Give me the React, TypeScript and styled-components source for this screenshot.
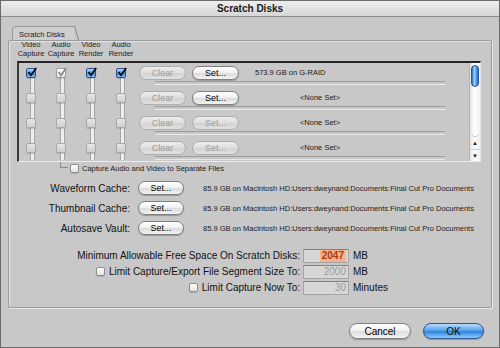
import React from "react";
import styled, { createGlobalStyle, css } from "styled-components";

const Global = createGlobalStyle`
  html, body { margin: 0; padding: 0; background: #c8c8c8; }
  * { box-sizing: border-box; }
`;

const Window = styled.div`
  width: 500px;
  height: 348px;
  background: #c8c8c9;
  border: 1px solid #6c6c6c;
  display: flex;
  flex-direction: column;
  font-family: "Liberation Sans", Arial, sans-serif;
  color: #111;
  overflow: hidden;
`;

const TitleBar = styled.div`
  height: 16px;
  flex: none;
  display: flex;
  align-items: center;
  justify-content: center;
  background: linear-gradient(#eeeeee, #d6d6d6);
  border-bottom: 1px solid #8e8e8e;
  font-size: 10px;
  font-weight: bold;
  color: #1a1a1a;
`;

const Body = styled.div`
  flex: 1;
  display: flex;
  flex-direction: column;
  padding: 9px 7px 0 7px;
`;

const TabStrip = styled.div`
  display: flex;
  padding-left: 4px;
`;

const Tab = styled.div`
  position: relative;
  height: 14px;
  padding: 3px 9px 0 6px;
  font-size: 7.5px;
  color: #222;
  background: #cecece;
  border-left: 1px solid #9a9a9a;
  border-top: 1px solid #9a9a9a;
  border-top-left-radius: 4px;
  &::after {
    content: "";
    position: absolute;
    right: -1px;
    top: -1px;
    width: 1px;
    height: 15px;
    background: #8a8a8a;
    transform: rotate(-16deg);
    transform-origin: top;
  }
`;

const Panel = styled.div`
  height: 268px;
  display: flex;
  flex-direction: column;
  border: 1px solid #9b9b9b;
  box-shadow: inset 1px 1px 0 #e4e4e4, 1px 1px 0 #e8e8e8;
  border-radius: 2px;
`;

const CheckGrid = styled.div`
  display: grid;
  grid-template-columns: repeat(4, 24px);
  column-gap: 6px;
  flex: none;
`;

const Headers = styled(CheckGrid)`
  margin: -1px 0 0 10px;
  height: 21px;
`;

const HeaderCell = styled.div`
  font-size: 7.5px;
  line-height: 9px;
  text-align: center;
  white-space: nowrap;
  display: flex;
  justify-content: center;
  color: #222;
`;

const ListBox = styled.div`
  margin: 0 10px 0 8px;
  height: 101px;
  display: flex;
  border-top: 2px solid #262626;
  border-left: 2px solid #3a3a3a;
  border-right: 1px solid #e6e6e6;
  border-bottom: 1px solid #ececec;
  overflow: hidden;
`;

const RowsArea = styled.div`
  flex: 1;
  margin-top: -3px;
`;

const Row = styled.div`
  position: relative;
  height: 25px;
  display: flex;
  align-items: center;
  &::after {
    content: "";
    position: absolute;
    left: 136px;
    right: 24px;
    bottom: 0;
    height: 2px;
    border-top: 1px solid #9c9c9c;
    border-bottom: 1px solid #e9e9e9;
  }
`;

const RowChecks = styled(CheckGrid)`
  height: 100%;
`;

const CheckCell = styled.div<{ $first?: boolean }>`
  position: relative;
  display: flex;
  align-items: center;
  justify-content: center;
  &::before {
    content: "";
    position: absolute;
    left: 50%;
    margin-left: -1px;
    top: ${(p) => (p.$first ? "50%" : "0")};
    bottom: 0;
    width: 3px;
    background: #eeeeee;
    border-left: 1px solid #a6a6a6;
    border-right: 1px solid #a6a6a6;
  }
`;

const boxStates = {
  on: css`
    background: linear-gradient(#b4dafc, #4a98e6 50%, #2f83dc 52%, #8ccaf9);
    border: 1px solid #2b4f86;
    color: #0c0c0c;
  `,
  dim: css`
    background: linear-gradient(#ffffff, #e4e4e4);
    border: 1px solid #9c9c9c;
    color: #8a8a8a;
  `,
  off: css`
    background: linear-gradient(#e6e6e6, #cfcfcf);
    border: 1px solid #a9a9a9;
    color: transparent;
  `,
  plain: css`
    background: linear-gradient(#ffffff, #e2e2e2);
    border: 1px solid #8d8d8d;
    color: transparent;
  `,
};

type BoxState = keyof typeof boxStates;

const Box = styled.span<{ $state: BoxState; $size?: number }>`
  position: relative;
  z-index: 1;
  flex: none;
  width: ${(p) => p.$size ?? 10}px;
  height: ${(p) => p.$size ?? 10}px;
  border-radius: 2px;
  display: flex;
  align-items: center;
  justify-content: center;
  box-shadow: 0 1px 1px rgba(0, 0, 0, 0.15);
  ${(p) => boxStates[p.$state]}
  svg {
    margin-top: -2px;
    margin-right: -2px;
  }
`;

const Check = ({ state, size }: { state: BoxState; size?: number }) => (
  <Box $state={state} $size={size}>
    {(state === "on" || state === "dim") && (
      <svg width="10" height="10" viewBox="0 0 10 10">
        <path d="M1.5 5 L4 8.2 L9.2 1" fill="none" stroke="currentColor" strokeWidth="1.8" />
      </svg>
    )}
  </Box>
);

const PushButton = styled.div<{ $w: number; $disabled?: boolean; $primary?: boolean; $h?: number }>`
  flex: none;
  width: ${(p) => p.$w}px;
  height: ${(p) => p.$h ?? 14}px;
  border-radius: ${(p) => (p.$h ?? 14) / 2}px;
  display: flex;
  align-items: center;
  justify-content: center;
  font-size: ${(p) => (p.$h ? 10 : 9)}px;
  border: 1px solid #7f7f7f;
  background: linear-gradient(#ffffff, #f1f1f1 45%, #dcdcdc 55%, #f4f4f4);
  box-shadow: 0 1px 1px rgba(0, 0, 0, 0.25);
  color: #000;
  ${(p) =>
    p.$disabled &&
    css`
      border-color: #adadad;
      background: linear-gradient(#ececec, #dedede 50%, #d2d2d2 52%, #e2e2e2);
      color: #9b9b9b;
      box-shadow: none;
    `}
  ${(p) =>
    p.$primary &&
    css`
      border-color: #2e5590;
      background: linear-gradient(#b6dcfc, #5aa4ee 45%, #2f84df 55%, #8dcbfa);
      color: #0d0d0d;
    `}
`;

const ClearButton = styled(PushButton)`
  margin-left: 6px;
`;

const SetButton = styled(PushButton)`
  margin-left: 6px;
`;

const Info = styled.div<{ $center?: boolean }>`
  width: 150px;
  margin-left: 6px;
  font-size: 7.5px;
  color: #1b1b1b;
  text-align: ${(p) => (p.$center ? "center" : "left")};
  padding-left: ${(p) => (p.$center ? 0 : 10)}px;
  white-space: nowrap;
`;

const ScrollBar = styled.div`
  width: 11px;
  flex: none;
  display: flex;
  flex-direction: column;
  background: #f6f6f6;
  border-left: 1px solid #b4b4b4;
`;

const Track = styled.div`
  flex: 1;
  padding: 2px 1px;
  background: linear-gradient(90deg, #e2e2e2, #ffffff 40%, #f4f4f4);
  border-bottom-left-radius: 5px;
  border-bottom-right-radius: 5px;
  border-bottom: 1px solid #c4c4c4;
`;

const Thumb = styled.div`
  height: 22px;
  border-radius: 5px;
  border: 1px solid #24569f;
  background: linear-gradient(90deg, #2a6ccd, #9ccdf8 40%, #5ea6ee 65%, #2a6bca);
`;

const Arrow = styled.div`
  height: 12px;
  display: flex;
  align-items: center;
  justify-content: center;
  font-size: 6px;
  color: #222;
  background: linear-gradient(90deg, #e6e6e6, #ffffff 50%, #eeeeee);
  & + & {
    border-top: 1px solid #cfcfcf;
  }
`;

const SeparateRow = styled.div`
  height: 12px;
  display: flex;
  align-items: center;
  padding-left: 51px;
  font-size: 7.5px;
`;

const Elbow = styled.span`
  align-self: flex-start;
  width: 8px;
  height: 6px;
  border-left: 1px solid #8c8c8c;
  border-bottom: 1px solid #8c8c8c;
  margin-right: 2px;
`;

const SeparateLabel = styled.span`
  margin-left: 3px;
  color: #1b1b1b;
`;

const CacheGrid = styled.div`
  display: grid;
  grid-template-columns: 121px 46px 1fr;
  grid-auto-rows: 16px;
  column-gap: 8px;
  row-gap: 4px;
  margin-top: 6px;
  align-items: center;
`;

const FieldLabel = styled.div`
  font-size: 10px;
  text-align: right;
  white-space: nowrap;
  display: flex;
  align-items: center;
  justify-content: flex-end;
  gap: 4px;
`;

const Path = styled.div`
  margin-left: 11px;
  font-size: 7.5px;
  color: #1b1b1b;
  white-space: nowrap;
`;

const SettingsGrid = styled.div`
  display: grid;
  grid-template-columns: 291px 46px auto;
  grid-auto-rows: 15px;
  column-gap: 3px;
  row-gap: 1px;
  margin-top: 12px;
  align-items: center;
`;

const Field = styled.div`
  height: 14px;
  display: flex;
  align-items: center;
  justify-content: flex-end;
  padding-right: 2px;
  font-size: 10px;
  background: #d7d7d7;
  border: 1px solid #a4a4a4;
  border-top-color: #808080;
  color: #9a9a9a;
`;

const Selected = styled.span`
  background: #f2b38e;
  color: #b2380c;
  font-weight: bold;
  padding: 0 2px;
  line-height: 12px;
`;

const Unit = styled.div`
  font-size: 10px;
  margin-left: 1px;
`;

const Footer = styled.div`
  display: flex;
  justify-content: flex-end;
  gap: 12px;
  padding: 15px 8px 0 0;
`;

const rows = [
  { checks: ["on", "dim", "on", "on"] as BoxState[], set: true, info: "573.9 GB on  G-RAID" },
  { checks: ["off", "off", "off", "off"] as BoxState[], set: true, info: "<None Set>" },
  { checks: ["off", "off", "off", "off"] as BoxState[], set: false, info: "<None Set>" },
  { checks: ["off", "off", "off", "off"] as BoxState[], set: false, info: "<None Set>" },
];

const path = "85.9 GB on  Macintosh HD:Users:dweynand:Documents:Final Cut Pro Documents";

export default function App() {
  return (
    <>
      <Global />
      <Window>
        <TitleBar>Scratch Disks</TitleBar>
        <Body>
          <TabStrip>
            <Tab>Scratch Disks</Tab>
          </TabStrip>
          <Panel>
            <Headers>
              <HeaderCell>Video<br />Capture</HeaderCell>
              <HeaderCell>Audio<br />Capture</HeaderCell>
              <HeaderCell>Video<br />Render</HeaderCell>
              <HeaderCell>Audio<br />Render</HeaderCell>
            </Headers>
            <ListBox>
              <RowsArea>
                {rows.map((r, i) => (
                  <Row key={i}>
                    <RowChecks>
                      {r.checks.map((c, j) => (
                        <CheckCell key={j} $first={i === 0}>
                          <Check state={c} />
                        </CheckCell>
                      ))}
                    </RowChecks>
                    <ClearButton $w={47} $disabled>Clear</ClearButton>
                    <SetButton $w={47} $disabled={!r.set}>Set...</SetButton>
                    <Info $center={i > 0}>{r.info}</Info>
                  </Row>
                ))}
              </RowsArea>
              <ScrollBar>
                <Track>
                  <Thumb />
                </Track>
                <Arrow>▲</Arrow>
                <Arrow>▼</Arrow>
              </ScrollBar>
            </ListBox>
            <SeparateRow>
              <Elbow />
              <Check state="plain" size={9} />
              <SeparateLabel>Capture Audio and Video to Separate Files</SeparateLabel>
            </SeparateRow>
            <CacheGrid>
              <FieldLabel>Waveform Cache:</FieldLabel>
              <PushButton $w={46}>Set...</PushButton>
              <Path>{path}</Path>
              <FieldLabel>Thumbnail Cache:</FieldLabel>
              <PushButton $w={46}>Set...</PushButton>
              <Path>{path}</Path>
              <FieldLabel>Autosave Vault:</FieldLabel>
              <PushButton $w={46}>Set...</PushButton>
              <Path>{path}</Path>
            </CacheGrid>
            <SettingsGrid>
              <FieldLabel>Minimum Allowable Free Space On Scratch Disks:</FieldLabel>
              <Field>
                <Selected>2047</Selected>
              </Field>
              <Unit>MB</Unit>
              <FieldLabel>
                <Check state="plain" size={9} />
                Limit Capture/Export File Segment Size To:
              </FieldLabel>
              <Field>2000</Field>
              <Unit>MB</Unit>
              <FieldLabel>
                <Check state="plain" size={9} />
                Limit Capture Now To:
              </FieldLabel>
              <Field>30</Field>
              <Unit>Minutes</Unit>
            </SettingsGrid>
          </Panel>
          <Footer>
            <PushButton $w={62} $h={16}>Cancel</PushButton>
            <PushButton $w={61} $h={16} $primary>OK</PushButton>
          </Footer>
        </Body>
      </Window>
    </>
  );
}
